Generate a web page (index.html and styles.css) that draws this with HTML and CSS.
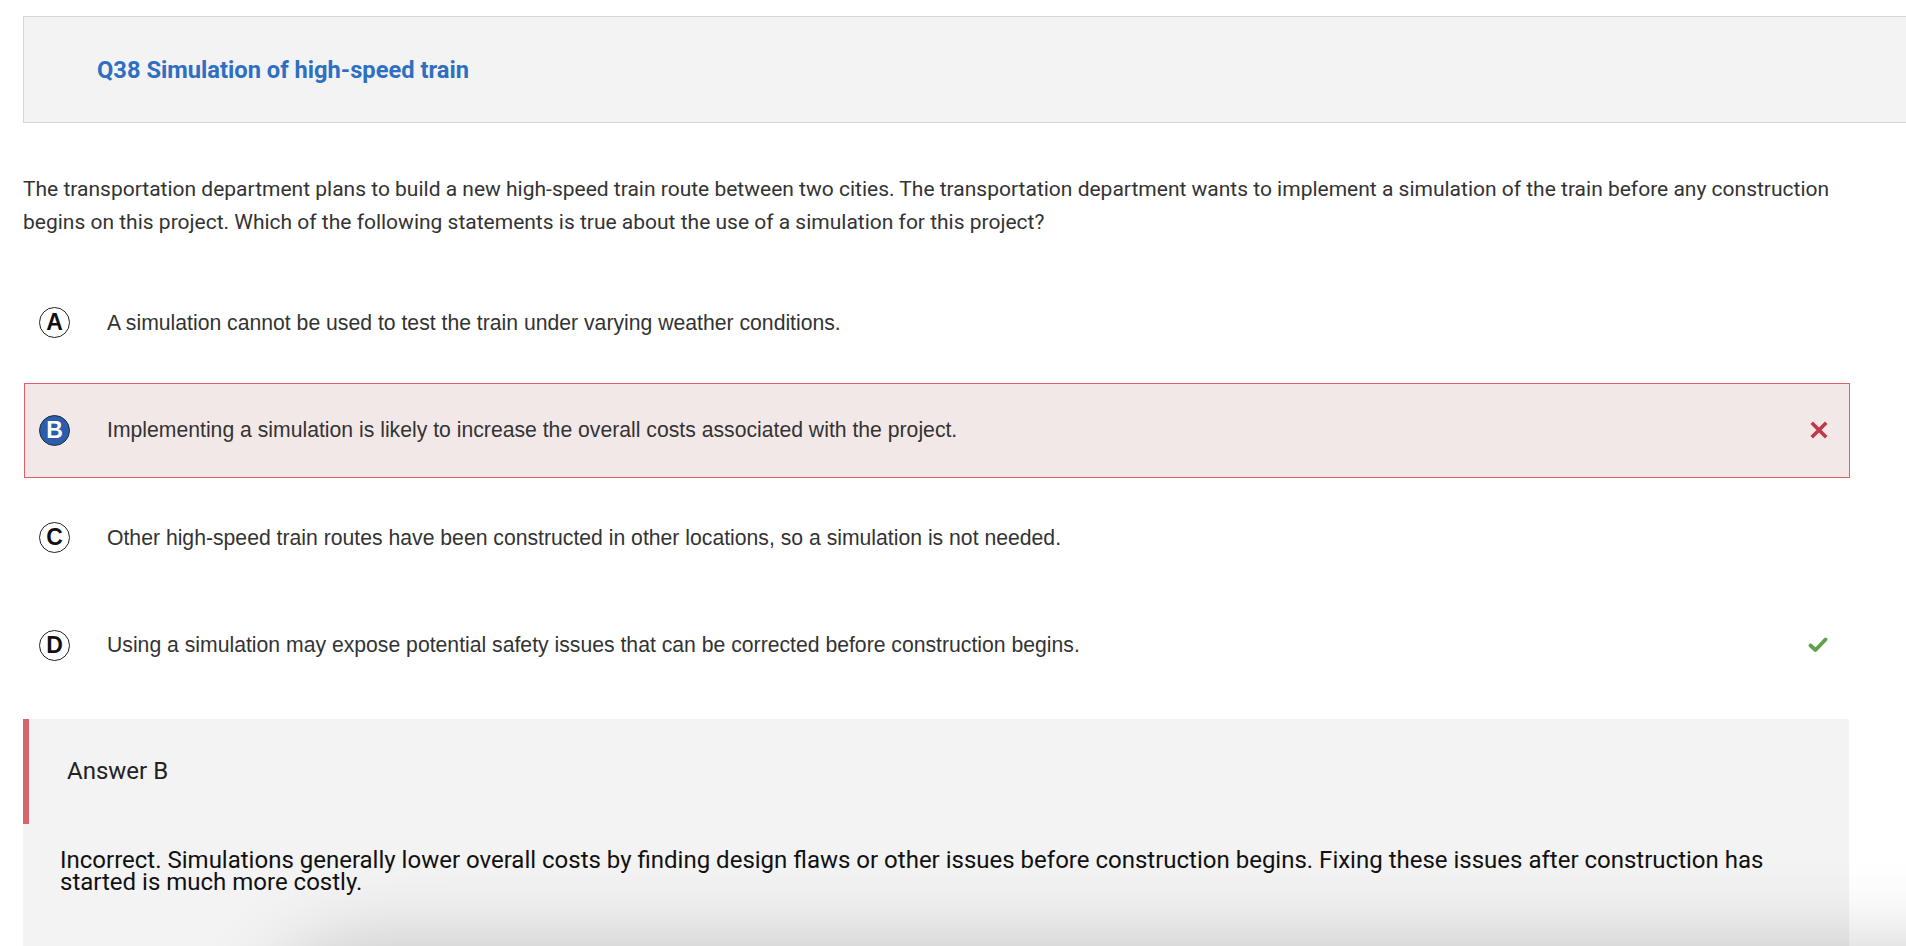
FILE: index.html
```html
<!DOCTYPE html>
<html lang="en">
<head>
<meta charset="utf-8">
<title>Q38 Simulation of high-speed train</title>
<link rel="stylesheet" href="styles.css">
</head>
<body>
<div class="page">
  <div class="qhead">
    <h1 class="qtitle">Q38 Simulation of high-speed train</h1>
  </div>

  <p class="stem">The transportation department plans to build a new high-speed train route between two cities. The transportation department wants to implement a simulation of the train before any construction begins on this project. Which of the following statements is true about the use of a simulation for this project?</p>

  <ul class="options">
    <li class="opt">
      <span class="badge">A</span>
      <span class="opt-text">A simulation cannot be used to test the train under varying weather conditions.</span>
    </li>
    <li class="opt opt-wrong">
      <span class="badge badge-selected">B</span>
      <span class="opt-text">Implementing a simulation is likely to increase the overall costs associated with the project.</span>
      <svg class="mark" width="18" height="18" viewBox="0 0 18 18"><path d="M3 3 L15 15 M15 3 L3 15" stroke="#c0394b" stroke-width="3.6" stroke-linecap="square" fill="none"/></svg>
    </li>
    <li class="opt">
      <span class="badge">C</span>
      <span class="opt-text">Other high-speed train routes have been constructed in other locations, so a simulation is not needed.</span>
    </li>
    <li class="opt">
      <span class="badge">D</span>
      <span class="opt-text">Using a simulation may expose potential safety issues that can be corrected before construction begins.</span>
      <svg class="mark" width="20" height="16" viewBox="0 0 20 16"><path d="M2.5 8.5 L7.5 13 L17.5 2.5" stroke="#5ea24a" stroke-width="3.8" stroke-linecap="round" stroke-linejoin="round" fill="none"/></svg>
    </li>
  </ul>

  <section class="answer">
    <div class="answer-head">Answer B</div>
    <p class="explain">Incorrect. Simulations generally lower overall costs by finding design flaws or other issues before construction begins. Fixing these issues after construction has started is much more costly.</p>
  </section>
</div>
<div class="bottom-shade"></div>
</body>
</html>
```

FILE: styles.css
```css
html, body {
  margin: 0;
  padding: 0;
  background: #ffffff;
  overflow: hidden;
}

body {
  font-family: Roboto, "Liberation Sans", Arial, sans-serif;
  color: #333333;
}

.page {
  padding-top: 16px;
}

.qhead {
  margin-left: 23px;
  height: 105px;
  background: #f3f3f4;
  border: 1px solid #d6d6da;
  border-right: none;
  display: flex;
  align-items: center;
}

.qtitle {
  margin: 0 0 0 73px;
  font-size: 23.7px;
  font-weight: 700;
  color: #2f6fc2;
}

.stem {
  margin: 50px 0 0 23px;
  width: 1826px;
  font-size: 21px;
  line-height: 33px;
  color: #333333;
}

.options {
  list-style: none;
  margin: 36px 0 0 24px;
  padding: 0;
  width: 1826px;
  display: flex;
  flex-direction: column;
  gap: 12.5px;
}

.opt {
  box-sizing: border-box;
  height: 95px;
  display: flex;
  align-items: center;
  padding: 0 21px 0 14px;
  border: 1px solid transparent;
  font-family: "Liberation Sans", Arial, sans-serif;
}

.opt-wrong {
  background: #f3e8e8;
  border-color: #dc5f6a;
}

.badge {
  box-sizing: border-box;
  width: 31px;
  height: 31px;
  border-radius: 50%;
  border: 1.3px solid #222222;
  display: flex;
  align-items: center;
  justify-content: center;
  font-family: "Liberation Sans", Arial, sans-serif;
  font-weight: 700;
  font-size: 23px;
  color: #111111;
  flex: none;
  background: #ffffff;
}

.badge-selected {
  background: #2b5dab;
  border-color: #1c2d4c;
  color: #ffffff;
}

.opt-text {
  margin-left: 37px;
  font-size: 21.2px;
  color: #333333;
  flex: 1;
}

.mark {
  flex: none;
}

.answer {
  margin: 26px 0 0 23px;
  width: 1826px;
  height: 300px;
  background: #f3f3f3;
}

.answer-head {
  box-sizing: border-box;
  height: 105px;
  border-left: 6px solid #d9646e;
  padding-left: 38px;
  display: flex;
  align-items: center;
  font-size: 24px;
  color: #222222;
}

.explain {
  margin: 25px 60px 0 37px;
  font-size: 24px;
  line-height: 22px;
  color: #111111;
}

.bottom-shade {
  position: fixed;
  left: 300px;
  right: -200px;
  top: 985px;
  height: 200px;
  box-shadow: 0 0 90px 30px rgba(0, 0, 0, 0.24);
  border-radius: 60px;
}
```
